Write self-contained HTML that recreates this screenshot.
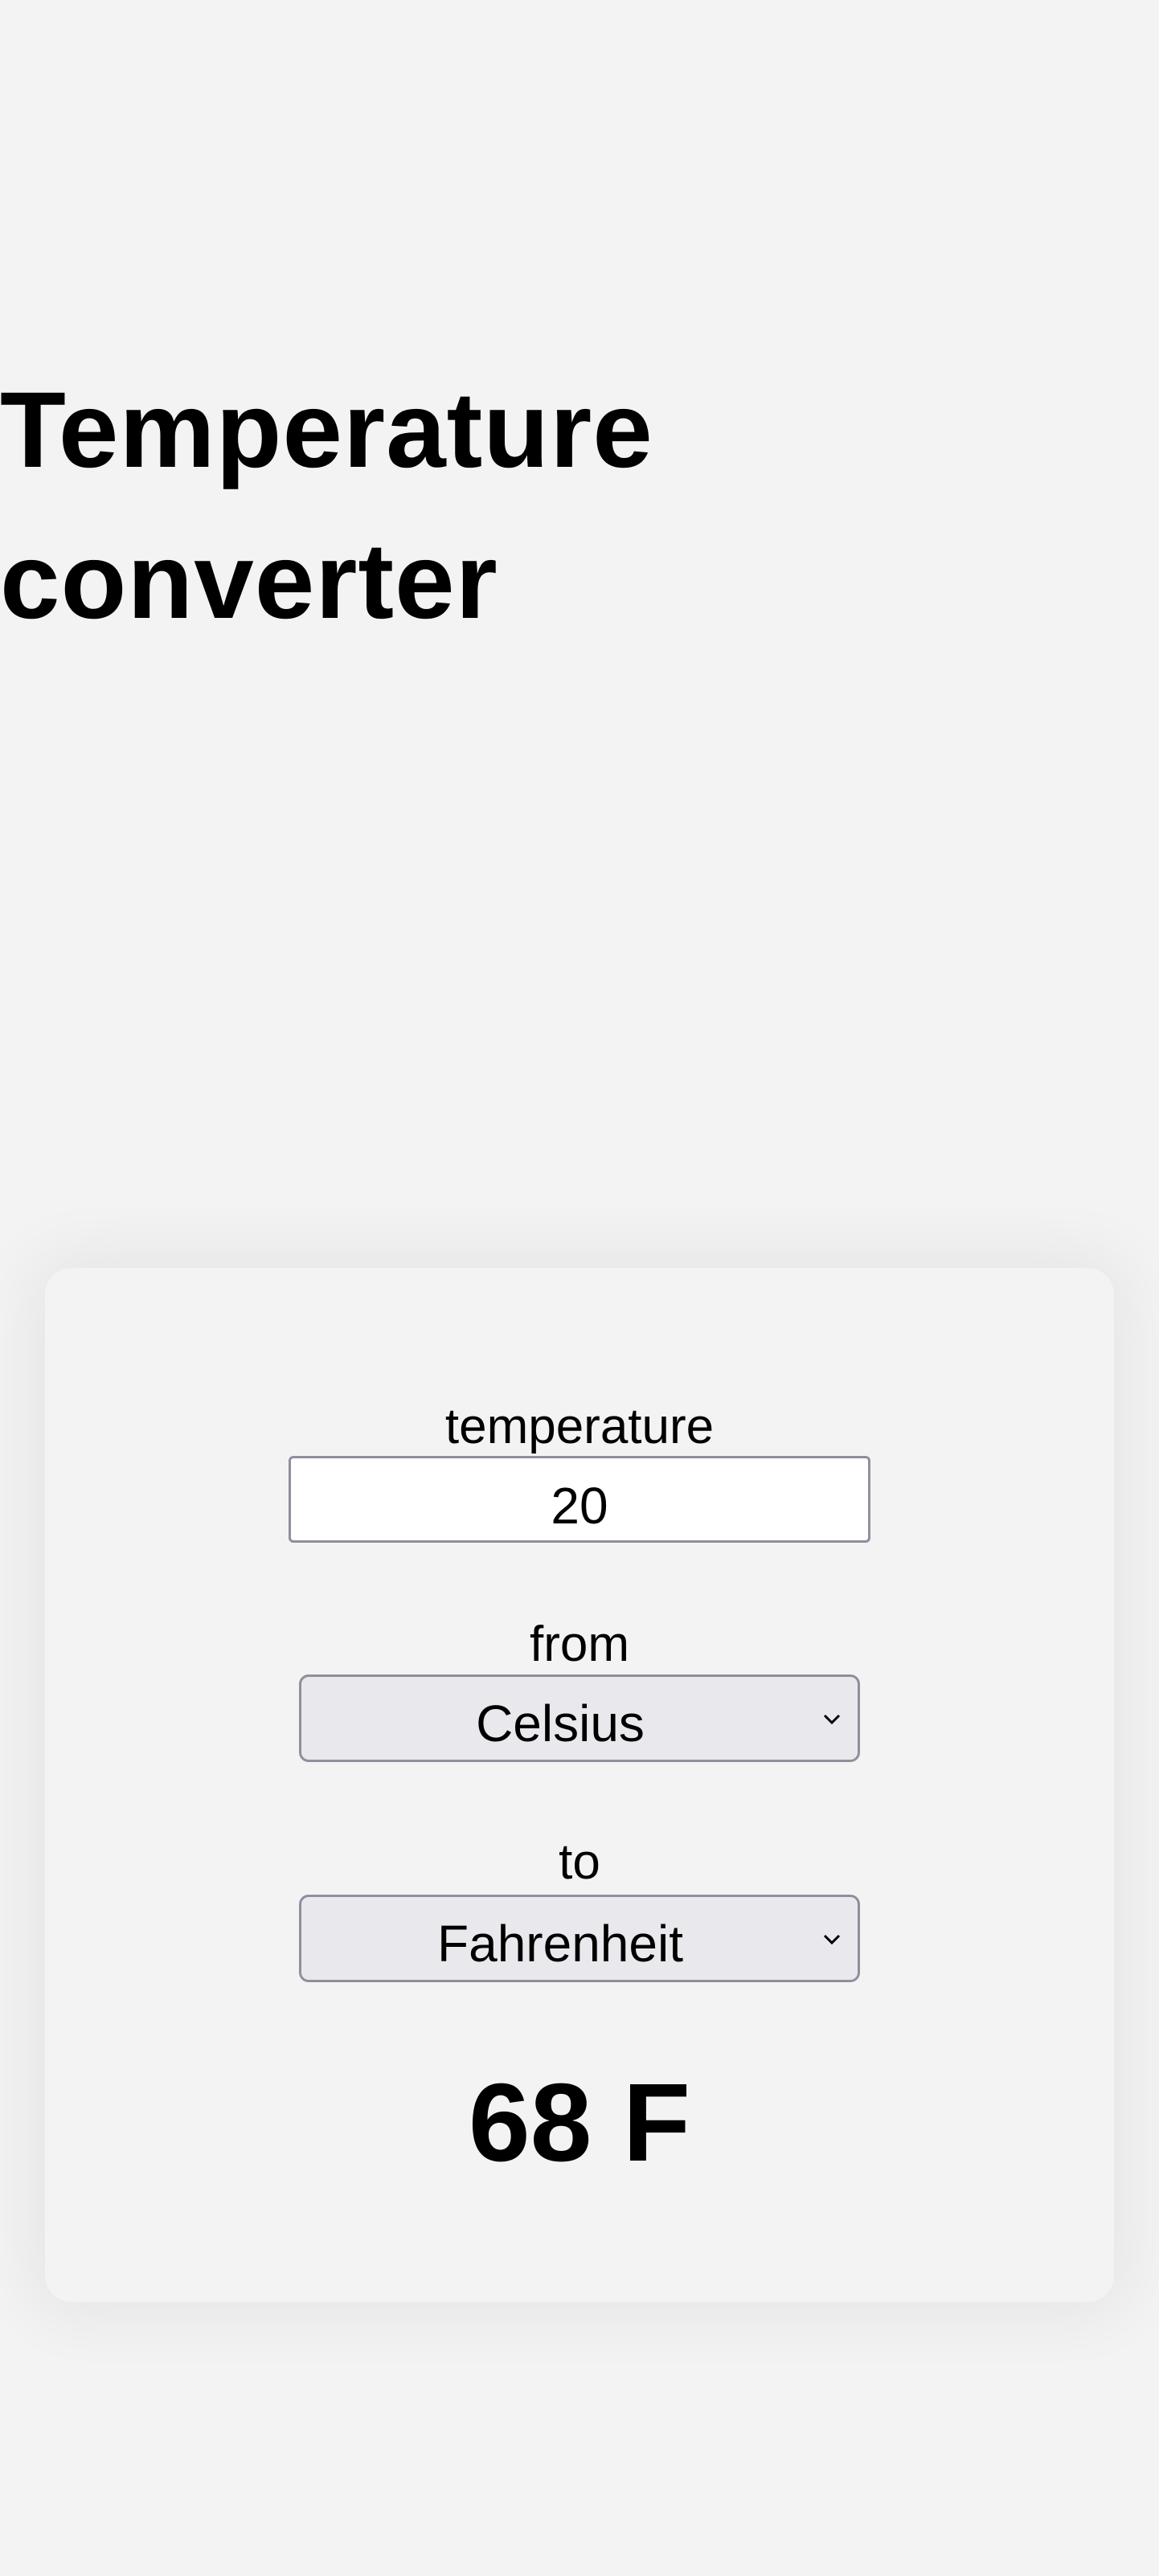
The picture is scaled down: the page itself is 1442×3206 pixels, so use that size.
<!DOCTYPE html>
<html><head><meta charset="utf-8"><style>
html,body{margin:0;padding:0;background:#f3f3f3;}
body{width:1442px;height:3206px;position:relative;overflow:hidden;font-family:"Liberation Sans",sans-serif;color:#000;}
.t{position:absolute;left:0;font-weight:bold;font-size:134px;line-height:1;white-space:nowrap;}
.card{position:absolute;left:56px;top:1578px;width:1330px;height:1287px;background:#f3f3f3;border-radius:33px;box-shadow:0 0 80px 20px rgba(0,0,0,0.055);}
.lbl{position:absolute;left:0;width:1442px;text-align:center;font-size:62px;line-height:1;}
.box{position:absolute;box-sizing:border-box;border:3px solid #8f8f9d;border-radius:6px;}
.in{left:359px;top:1812px;width:724px;height:108px;background:#fff;}
.sel{left:372px;width:698px;height:109px;background:#e9e8ed;border-radius:12px;}
.txt{position:absolute;font-size:64px;line-height:1;text-align:center;}
.res{position:absolute;left:0;width:1442px;text-align:center;font-weight:bold;font-size:138px;line-height:1;}
svg{position:absolute;}
</style></head><body>
<div class="t" style="top:469px;letter-spacing:1px">Temperature</div>
<div class="t" style="top:657px;letter-spacing:1px">converter</div>
<div class="card"></div>
<div class="lbl" style="top:1745px">temperature</div>
<div class="box in"></div>
<div class="txt" style="left:359px;width:724px;top:1842px">20</div>
<div class="lbl" style="top:2016px">from</div>
<div class="box sel" style="top:2084px"></div>
<div class="txt" style="left:372px;width:650px;top:2113px">Celsius</div>
<svg style="left:1022px;top:2130px" width="26" height="20" viewBox="0 0 26 20"><path d="M4 5 L13 14 L22 5" fill="none" stroke="#000" stroke-width="3"/></svg>
<div class="lbl" style="top:2287px">to</div>
<div class="box sel" style="top:2358px"></div>
<div class="txt" style="left:372px;width:650px;top:2387px">Fahrenheit</div>
<svg style="left:1022px;top:2404px" width="26" height="20" viewBox="0 0 26 20"><path d="M4 5 L13 14 L22 5" fill="none" stroke="#000" stroke-width="3"/></svg>
<div class="res" style="top:2573px">68 F</div>
</body></html>
